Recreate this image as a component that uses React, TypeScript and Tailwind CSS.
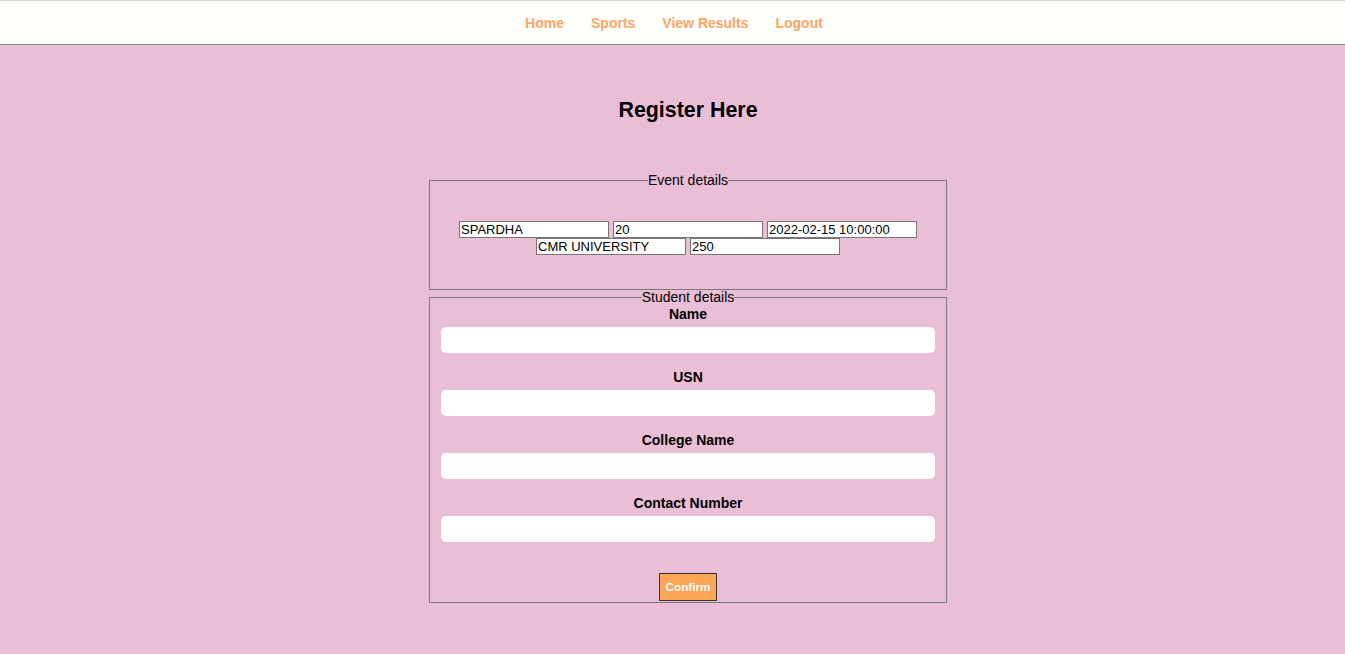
export default function App() {
  const navLinks = ["Home", "Sports", "View Results", "Logout"];
  const eventRow1 = ["SPARDHA", "20", "2022-02-15 10:00:00"];
  const eventRow2 = ["CMR UNIVERSITY", "250"];
  const studentFields = ["Name", "USN", "College Name", "Contact Number"];

  return (
    <div className="min-h-screen bg-[#ebbed8] font-['Liberation_Sans',Arial,sans-serif] text-black">
      {/* Nav */}
      <nav className="h-[45px] bg-[#fffffb] border-t border-t-[#d9d9d9] border-b border-b-[#8a8a8a] flex items-center justify-center gap-[27px] pl-[3px]">
        {navLinks.map((link) => (
          <a key={link} href="#" className="text-[14px] font-bold text-[#ffa366] leading-none">
            {link}
          </a>
        ))}
      </nav>

      <main className="pl-[31px]">
        <h1 className="text-center text-[21.4px] font-bold leading-[25px] mt-[53px]">Register Here</h1>

        <div className="w-[518px] mx-auto mt-[49px]">
          {/* Event details */}
          <fieldset className="border border-[#777] px-[11px] pb-[34px]">
            <legend className="mx-auto text-[14px] leading-[16px]">Event details</legend>
            <div className="pt-[33px] flex flex-col items-center">
              <div className="flex gap-[4px]">
                {eventRow1.map((v) => (
                  <input
                    key={v}
                    defaultValue={v}
                    className="w-[150px] h-[17px] bg-white border border-[#767676] text-[13px] leading-[15px] px-[1px] outline-none"
                  />
                ))}
              </div>
              <div className="flex gap-[4px]">
                {eventRow2.map((v) => (
                  <input
                    key={v}
                    defaultValue={v}
                    className="w-[150px] h-[17px] bg-white border border-[#767676] text-[13px] leading-[15px] px-[1px] outline-none"
                  />
                ))}
              </div>
            </div>
          </fieldset>

          {/* Student details */}
          <fieldset className="border border-[#777] px-[11px] pb-[1px] -mt-[1px]">
            <legend className="mx-auto text-[14px] leading-[16px]">Student details</legend>
            <div className="flex flex-col pt-[1px]">
              {studentFields.map((label) => (
                <div key={label} className="flex flex-col mb-[16px]">
                  <label className="text-center text-[14px] font-bold leading-[16px] mb-[5px]">{label}</label>
                  <input className="h-[26px] bg-white rounded-[5px] outline-none px-2 text-[13px]" />
                </div>
              ))}
            </div>
            <div className="flex justify-center pt-[15px]">
              <button className="h-[28px] px-[6px] bg-[#ffa556] border border-[#333] text-white text-[11.7px] font-bold">
                Confirm
              </button>
            </div>
          </fieldset>
        </div>
      </main>
    </div>
  );
}
